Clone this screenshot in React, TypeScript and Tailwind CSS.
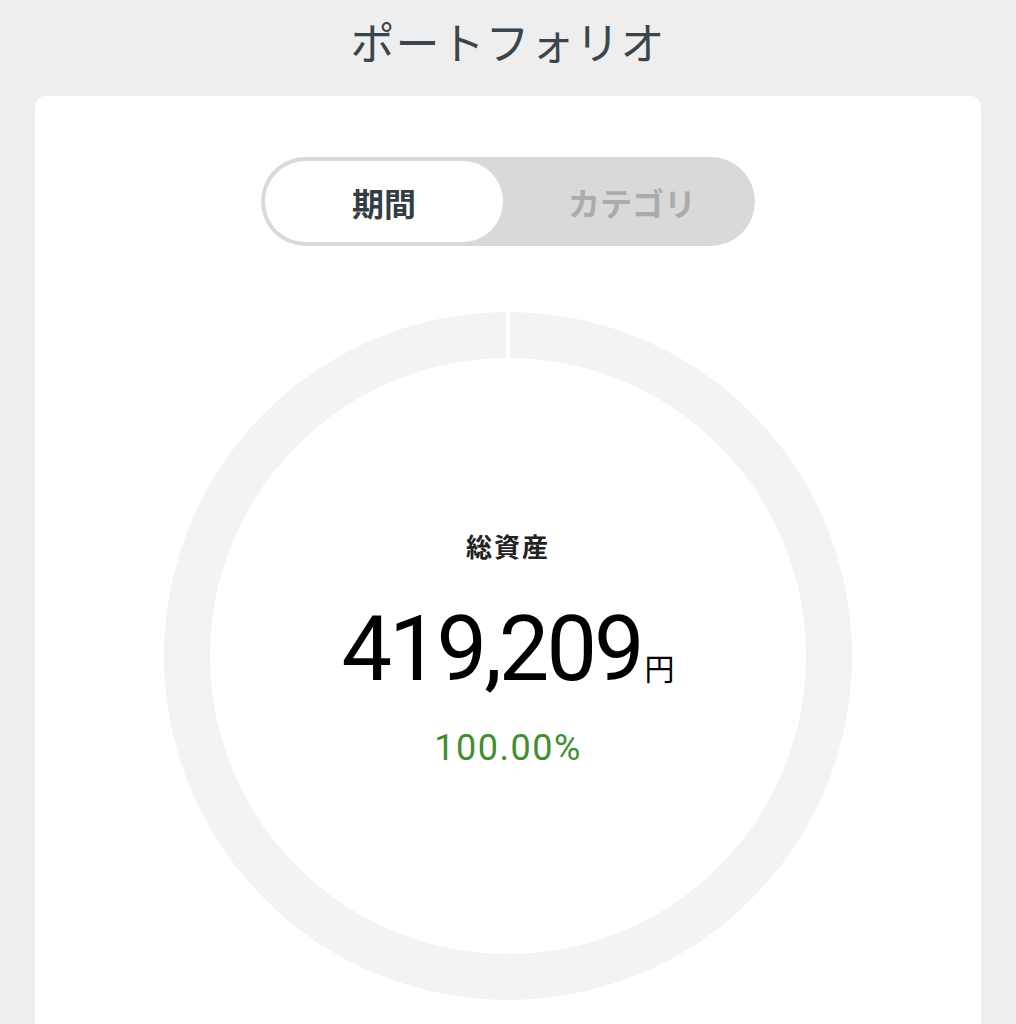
import { useState } from "react";

const jp = "font-['Noto_Sans_CJK_JP','Noto_Sans',sans-serif]";

function Donut() {
  // one segment covering the whole ring, with a thin gap at 12 o'clock
  return (
    <div className="relative w-[688px] h-[688px] rounded-full border-[46px] border-[#f3f3f3] flex flex-col items-center justify-center pb-[16px]">
      <svg
        className="absolute left-1/2 -translate-x-1/2 -top-[46px]"
        width="4"
        height="46"
        viewBox="0 0 4 46"
      >
        <rect x="0" y="0" width="4" height="46" fill="#ffffff" />
      </svg>
      <div className={`${jp} text-[26px] leading-[34px] font-bold text-[#222] tracking-[2px] mb-[42px]`}>
        総資産
      </div>
      <div className="flex items-baseline text-black h-[90px]">
        <span className="font-['Roboto',sans-serif] text-[90px] leading-[90px] font-normal tracking-[-3px]">
          419,209
        </span>
        <span className={`${jp} text-[30px] leading-[30px] ml-[3px]`}>円</span>
      </div>
      <div className="font-['Roboto',sans-serif] text-[36px] leading-[40px] text-[#3f8f2e] tracking-[1.5px] mt-[33px]">
        100.00%
      </div>
    </div>
  );
}

export default function App() {
  const [tab, setTab] = useState<"period" | "category">("period");

  return (
    <div className={`${jp} min-h-screen bg-[#eeeeee] overflow-hidden`}>
      <h1 className="text-center text-[44px] leading-[52px] pt-[15px] text-[#3a464c] tracking-[1px]">
        ポートフォリオ
      </h1>
      <div className="mx-[35px] mt-[29px] bg-white rounded-[10px] pt-[61px] pb-[80px] flex flex-col items-center">
        <div className="w-[494px] h-[89px] rounded-full bg-[#d9d9d9] p-[4px] flex">
          <button
            onClick={() => setTab("period")}
            className={`w-[238px] rounded-full text-[32px] font-bold ${
              tab === "period" ? "bg-white text-[#333d44]" : "text-[#ababab]"
            }`}
          >
            期間
          </button>
          <button
            onClick={() => setTab("category")}
            className={`flex-1 rounded-full text-[32px] font-bold pl-[10px] ${
              tab === "category" ? "bg-white text-[#333d44]" : "text-[#ababab]"
            }`}
          >
            カテゴリ
          </button>
        </div>
        <div className="mt-[66px]">
          <Donut />
        </div>
      </div>
    </div>
  );
}
